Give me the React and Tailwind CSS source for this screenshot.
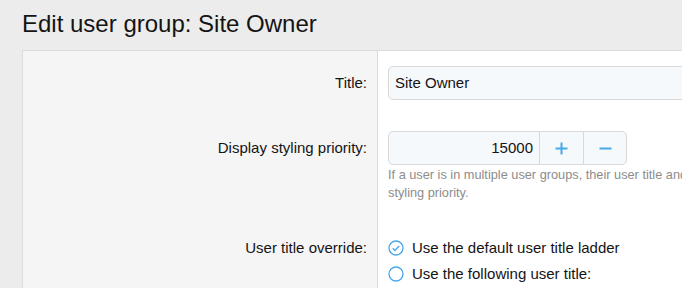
import React from "react";

export default function App() {
  return (
    <div className="w-[682px] h-[288px] overflow-hidden bg-[#ececec]" style={{ fontFamily: '"Liberation Sans", Arial, sans-serif' }}>
      <h1 className="pl-[22px] pt-[9px] h-[50px] text-[24px] leading-[30px] text-[#141414] font-normal">Edit user group: Site Owner</h1>
      <div className="ml-[22px] w-[720px] h-[260px] border border-[#dcdcdc] bg-white grid grid-cols-[355px_1fr]">
        <div className="bg-[#f5f5f5] border-r border-[#dcdcdc] text-[15px] text-[#141414] pr-[10px] text-right">
          <div className="h-[50px] pt-[15px] leading-[34px]">Title:</div>
          <div className="h-[64px] pt-[30px] leading-[34px]">Display styling priority:</div>
          <div className="pt-[71px] leading-[24px]">User title override:</div>
        </div>
        <div className="pl-[10px] text-[15px] text-[#141414]">
          <div className="pt-[15px]">
            <div className="h-[34px] w-[400px] rounded-[5px] border border-[#d8d8d8] bg-[#f6f9fc] px-[6px] leading-[32px]">Site Owner</div>
          </div>
          <div className="pt-[31px]">
            <div className="flex h-[34px] w-[239px] rounded-[5px] border border-[#d8d8d8] bg-[#f6f9fc]">
              <div className="w-[150px] text-right pr-[6px] leading-[32px]">15000</div>
              <div className="w-[44px] border-l border-[#d8d8d8] flex items-center justify-center">
                <svg width="13" height="13" viewBox="0 0 13 13"><path d="M6.5 0.5v12M0.5 6.5h12" stroke="#47a7eb" strokeWidth="2" /></svg>
              </div>
              <div className="flex-1 border-l border-[#d8d8d8] flex items-center justify-center">
                <svg width="13" height="13" viewBox="0 0 13 13"><path d="M0.5 6.5h12" stroke="#47a7eb" strokeWidth="2" /></svg>
              </div>
            </div>
            <div className="text-[12.75px] leading-[18px] text-[#8c8c8c] whitespace-nowrap pt-[1px]">
              If a user is in multiple user groups, their user title and styling are taken from the group with the highest display
              <br />
              styling priority.
            </div>
          </div>
          <div className="pt-[34px] flex flex-col gap-[2px]">
            <div className="flex items-center h-[24px] gap-[8px]">
              <svg width="16" height="16" viewBox="0 0 16 16">
                <circle cx="8" cy="8" r="7" fill="none" stroke="#47a7eb" strokeWidth="1.3" />
                <path d="M4.8 8.2l2.2 2.2 4.2-4.4" fill="none" stroke="#47a7eb" strokeWidth="1.4" />
              </svg>
              <span>Use the default user title ladder</span>
            </div>
            <div className="flex items-center h-[24px] gap-[8px]">
              <svg width="16" height="16" viewBox="0 0 16 16">
                <circle cx="8" cy="8" r="7" fill="none" stroke="#47a7eb" strokeWidth="1.3" />
              </svg>
              <span>Use the following user title:</span>
            </div>
          </div>
        </div>
      </div>
    </div>
  );
}
